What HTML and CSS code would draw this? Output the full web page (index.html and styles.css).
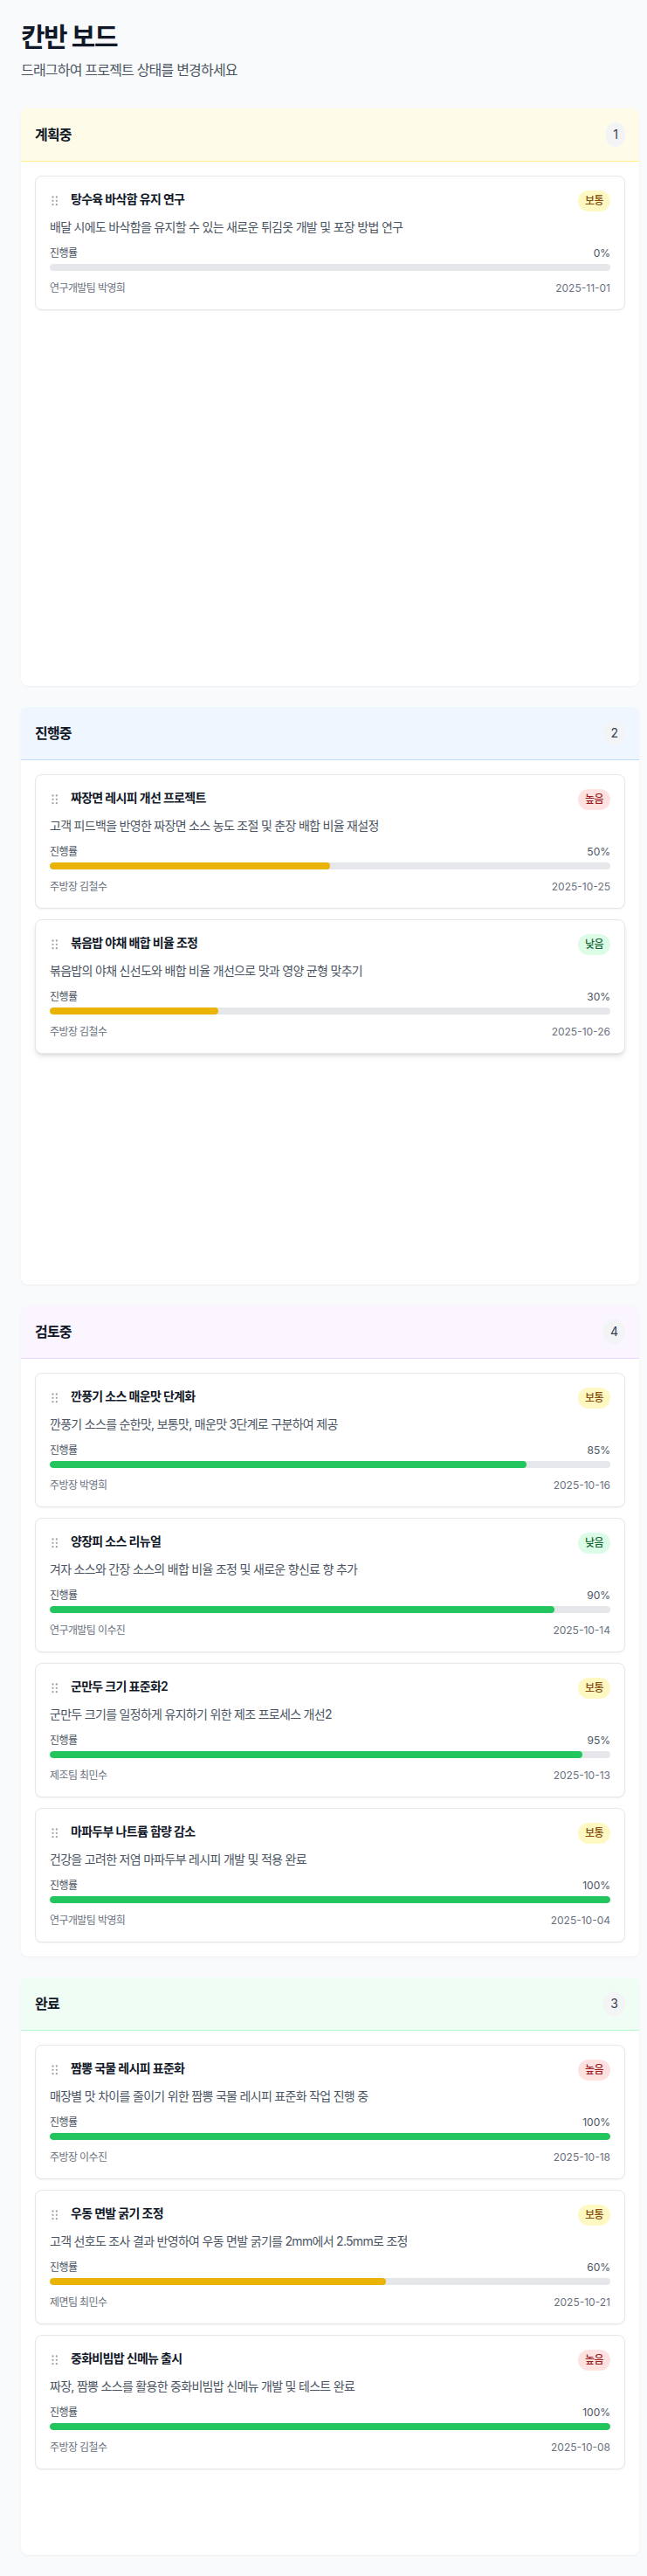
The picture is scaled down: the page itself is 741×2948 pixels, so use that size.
FILE: index.html
```html
<!DOCTYPE html>
<html lang="ko">
<head>
<meta charset="utf-8">
<title>칸반 보드</title>
<link rel="stylesheet" href="styles.css">
</head>
<body>
<div class="page">
  <header class="page-head">
    <h1 class="title">칸반 보드</h1>
    <p class="subtitle">드래그하여 프로젝트 상태를 변경하세요</p>
  </header>

  <main class="board">
    <section class="column">
      <div class="col-head head-yellow">
        <h2 class="col-title">계획중</h2>
        <span class="count">1</span>
      </div>
      <div class="col-body">
        <article class="card">
          <div class="card-top">
            <div class="card-name">
              <svg class="grip" viewBox="0 0 16 16" width="16" height="16"><circle cx="3.5" cy="5.5" r="1.15"/><circle cx="7.85" cy="5.5" r="1.15"/><circle cx="3.5" cy="9.85" r="1.15"/><circle cx="7.85" cy="9.85" r="1.15"/><circle cx="3.5" cy="14.2" r="1.15"/><circle cx="7.85" cy="14.2" r="1.15"/></svg>
              <h3 class="card-title">탕수육 바삭함 유지 연구</h3>
            </div>
            <span class="badge badge-mid">보통</span>
          </div>
          <p class="card-desc">배달 시에도 바삭함을 유지할 수 있는 새로운 튀김옷 개발 및 포장 방법 연구</p>
          <div class="progress-label"><span class="ko">진행률</span><span>0%</span></div>
          <div class="bar"><div class="bar-fill fill-yellow" style="width:0%"></div></div>
          <div class="card-foot"><span class="ko">연구개발팀 박영희</span><span>2025-11-01</span></div>
        </article>
      </div>
    </section>

    <section class="column">
      <div class="col-head head-blue">
        <h2 class="col-title">진행중</h2>
        <span class="count">2</span>
      </div>
      <div class="col-body">
        <article class="card">
          <div class="card-top">
            <div class="card-name">
              <svg class="grip" viewBox="0 0 16 16" width="16" height="16"><circle cx="3.5" cy="5.5" r="1.15"/><circle cx="7.85" cy="5.5" r="1.15"/><circle cx="3.5" cy="9.85" r="1.15"/><circle cx="7.85" cy="9.85" r="1.15"/><circle cx="3.5" cy="14.2" r="1.15"/><circle cx="7.85" cy="14.2" r="1.15"/></svg>
              <h3 class="card-title">짜장면 레시피 개선 프로젝트</h3>
            </div>
            <span class="badge badge-high">높음</span>
          </div>
          <p class="card-desc">고객 피드백을 반영한 짜장면 소스 농도 조절 및 춘장 배합 비율 재설정</p>
          <div class="progress-label"><span class="ko">진행률</span><span>50%</span></div>
          <div class="bar"><div class="bar-fill fill-yellow" style="width:50%"></div></div>
          <div class="card-foot"><span class="ko">주방장 김철수</span><span>2025-10-25</span></div>
        </article>
        <article class="card card-raised">
          <div class="card-top">
            <div class="card-name">
              <svg class="grip" viewBox="0 0 16 16" width="16" height="16"><circle cx="3.5" cy="5.5" r="1.15"/><circle cx="7.85" cy="5.5" r="1.15"/><circle cx="3.5" cy="9.85" r="1.15"/><circle cx="7.85" cy="9.85" r="1.15"/><circle cx="3.5" cy="14.2" r="1.15"/><circle cx="7.85" cy="14.2" r="1.15"/></svg>
              <h3 class="card-title">볶음밥 야채 배합 비율 조정</h3>
            </div>
            <span class="badge badge-low">낮음</span>
          </div>
          <p class="card-desc">볶음밥의 야채 신선도와 배합 비율 개선으로 맛과 영양 균형 맞추기</p>
          <div class="progress-label"><span class="ko">진행률</span><span>30%</span></div>
          <div class="bar"><div class="bar-fill fill-yellow" style="width:30%"></div></div>
          <div class="card-foot"><span class="ko">주방장 김철수</span><span>2025-10-26</span></div>
        </article>
      </div>
    </section>

    <section class="column">
      <div class="col-head head-purple">
        <h2 class="col-title">검토중</h2>
        <span class="count">4</span>
      </div>
      <div class="col-body">
        <article class="card">
          <div class="card-top">
            <div class="card-name">
              <svg class="grip" viewBox="0 0 16 16" width="16" height="16"><circle cx="3.5" cy="5.5" r="1.15"/><circle cx="7.85" cy="5.5" r="1.15"/><circle cx="3.5" cy="9.85" r="1.15"/><circle cx="7.85" cy="9.85" r="1.15"/><circle cx="3.5" cy="14.2" r="1.15"/><circle cx="7.85" cy="14.2" r="1.15"/></svg>
              <h3 class="card-title">깐풍기 소스 매운맛 단계화</h3>
            </div>
            <span class="badge badge-mid">보통</span>
          </div>
          <p class="card-desc">깐풍기 소스를 순한맛, 보통맛, 매운맛 3단계로 구분하여 제공</p>
          <div class="progress-label"><span class="ko">진행률</span><span>85%</span></div>
          <div class="bar"><div class="bar-fill fill-green" style="width:85%"></div></div>
          <div class="card-foot"><span class="ko">주방장 박영희</span><span>2025-10-16</span></div>
        </article>
        <article class="card">
          <div class="card-top">
            <div class="card-name">
              <svg class="grip" viewBox="0 0 16 16" width="16" height="16"><circle cx="3.5" cy="5.5" r="1.15"/><circle cx="7.85" cy="5.5" r="1.15"/><circle cx="3.5" cy="9.85" r="1.15"/><circle cx="7.85" cy="9.85" r="1.15"/><circle cx="3.5" cy="14.2" r="1.15"/><circle cx="7.85" cy="14.2" r="1.15"/></svg>
              <h3 class="card-title">양장피 소스 리뉴얼</h3>
            </div>
            <span class="badge badge-low">낮음</span>
          </div>
          <p class="card-desc">겨자 소스와 간장 소스의 배합 비율 조정 및 새로운 향신료 향 추가</p>
          <div class="progress-label"><span class="ko">진행률</span><span>90%</span></div>
          <div class="bar"><div class="bar-fill fill-green" style="width:90%"></div></div>
          <div class="card-foot"><span class="ko">연구개발팀 이수진</span><span>2025-10-14</span></div>
        </article>
        <article class="card">
          <div class="card-top">
            <div class="card-name">
              <svg class="grip" viewBox="0 0 16 16" width="16" height="16"><circle cx="3.5" cy="5.5" r="1.15"/><circle cx="7.85" cy="5.5" r="1.15"/><circle cx="3.5" cy="9.85" r="1.15"/><circle cx="7.85" cy="9.85" r="1.15"/><circle cx="3.5" cy="14.2" r="1.15"/><circle cx="7.85" cy="14.2" r="1.15"/></svg>
              <h3 class="card-title">군만두 크기 표준화2</h3>
            </div>
            <span class="badge badge-mid">보통</span>
          </div>
          <p class="card-desc">군만두 크기를 일정하게 유지하기 위한 제조 프로세스 개선2</p>
          <div class="progress-label"><span class="ko">진행률</span><span>95%</span></div>
          <div class="bar"><div class="bar-fill fill-green" style="width:95%"></div></div>
          <div class="card-foot"><span class="ko">제조팀 최민수</span><span>2025-10-13</span></div>
        </article>
        <article class="card">
          <div class="card-top">
            <div class="card-name">
              <svg class="grip" viewBox="0 0 16 16" width="16" height="16"><circle cx="3.5" cy="5.5" r="1.15"/><circle cx="7.85" cy="5.5" r="1.15"/><circle cx="3.5" cy="9.85" r="1.15"/><circle cx="7.85" cy="9.85" r="1.15"/><circle cx="3.5" cy="14.2" r="1.15"/><circle cx="7.85" cy="14.2" r="1.15"/></svg>
              <h3 class="card-title">마파두부 나트륨 함량 감소</h3>
            </div>
            <span class="badge badge-mid">보통</span>
          </div>
          <p class="card-desc">건강을 고려한 저염 마파두부 레시피 개발 및 적용 완료</p>
          <div class="progress-label"><span class="ko">진행률</span><span>100%</span></div>
          <div class="bar"><div class="bar-fill fill-green" style="width:100%"></div></div>
          <div class="card-foot"><span class="ko">연구개발팀 박영희</span><span>2025-10-04</span></div>
        </article>
      </div>
    </section>

    <section class="column">
      <div class="col-head head-green">
        <h2 class="col-title">완료</h2>
        <span class="count">3</span>
      </div>
      <div class="col-body">
        <article class="card">
          <div class="card-top">
            <div class="card-name">
              <svg class="grip" viewBox="0 0 16 16" width="16" height="16"><circle cx="3.5" cy="5.5" r="1.15"/><circle cx="7.85" cy="5.5" r="1.15"/><circle cx="3.5" cy="9.85" r="1.15"/><circle cx="7.85" cy="9.85" r="1.15"/><circle cx="3.5" cy="14.2" r="1.15"/><circle cx="7.85" cy="14.2" r="1.15"/></svg>
              <h3 class="card-title">짬뽕 국물 레시피 표준화</h3>
            </div>
            <span class="badge badge-high">높음</span>
          </div>
          <p class="card-desc">매장별 맛 차이를 줄이기 위한 짬뽕 국물 레시피 표준화 작업 진행 중</p>
          <div class="progress-label"><span class="ko">진행률</span><span>100%</span></div>
          <div class="bar"><div class="bar-fill fill-green" style="width:100%"></div></div>
          <div class="card-foot"><span class="ko">주방장 이수진</span><span>2025-10-18</span></div>
        </article>
        <article class="card">
          <div class="card-top">
            <div class="card-name">
              <svg class="grip" viewBox="0 0 16 16" width="16" height="16"><circle cx="3.5" cy="5.5" r="1.15"/><circle cx="7.85" cy="5.5" r="1.15"/><circle cx="3.5" cy="9.85" r="1.15"/><circle cx="7.85" cy="9.85" r="1.15"/><circle cx="3.5" cy="14.2" r="1.15"/><circle cx="7.85" cy="14.2" r="1.15"/></svg>
              <h3 class="card-title">우동 면발 굵기 조정</h3>
            </div>
            <span class="badge badge-mid">보통</span>
          </div>
          <p class="card-desc">고객 선호도 조사 결과 반영하여 우동 면발 굵기를 2mm에서 2.5mm로 조정</p>
          <div class="progress-label"><span class="ko">진행률</span><span>60%</span></div>
          <div class="bar"><div class="bar-fill fill-yellow" style="width:60%"></div></div>
          <div class="card-foot"><span class="ko">제면팀 최민수</span><span>2025-10-21</span></div>
        </article>
        <article class="card">
          <div class="card-top">
            <div class="card-name">
              <svg class="grip" viewBox="0 0 16 16" width="16" height="16"><circle cx="3.5" cy="5.5" r="1.15"/><circle cx="7.85" cy="5.5" r="1.15"/><circle cx="3.5" cy="9.85" r="1.15"/><circle cx="7.85" cy="9.85" r="1.15"/><circle cx="3.5" cy="14.2" r="1.15"/><circle cx="7.85" cy="14.2" r="1.15"/></svg>
              <h3 class="card-title">중화비빔밥 신메뉴 출시</h3>
            </div>
            <span class="badge badge-high">높음</span>
          </div>
          <p class="card-desc">짜장, 짬뽕 소스를 활용한 중화비빔밥 신메뉴 개발 및 테스트 완료</p>
          <div class="progress-label"><span class="ko">진행률</span><span>100%</span></div>
          <div class="bar"><div class="bar-fill fill-green" style="width:100%"></div></div>
          <div class="card-foot"><span class="ko">주방장 김철수</span><span>2025-10-08</span></div>
        </article>
      </div>
    </section>
  </main>
</div>
</body>
</html>
```

FILE: styles.css
```css
* {
  box-sizing: border-box;
}

html,
body {
  margin: 0;
  padding: 0;
}

body {
  background: #f9fafb;
  color: #111827;
  font-family: Inter, "Noto Sans CJK KR", "Noto Sans", sans-serif;
  font-feature-settings: "palt";
}

.page {
  padding: 24px 0 24px 24px;
}

.page-head {
  margin-bottom: 32px;
}

.title,
.subtitle,
.col-title,
.card-title,
.card-desc,
.badge,
.ko {
  letter-spacing: -0.05em;
}

.title {
  margin: 0 0 8px;
  font-size: 30px;
  line-height: 36px;
  font-weight: 700;
  color: #111827;
}

.subtitle {
  margin: 0;
  font-size: 16px;
  line-height: 24px;
  color: #4b5563;
}

.board {
  width: 708px;
  display: flex;
  flex-direction: column;
  gap: 24px;
}

.column {
  background: #ffffff;
  border-radius: 8px;
  box-shadow: 0 1px 2px rgba(0, 0, 0, 0.05);
}

.col-head {
  display: flex;
  align-items: center;
  justify-content: space-between;
  height: 61px;
  padding: 16px;
  border-bottom: 1px solid;
  border-radius: 8px 8px 0 0;
}

.head-yellow {
  background: #fefce8;
  border-bottom-color: #fef08a;
}

.head-blue {
  background: #eff6ff;
  border-bottom-color: #bfdbfe;
}

.head-purple {
  background: #faf5ff;
  border-bottom-color: #e9d5ff;
}

.head-green {
  background: #f0fdf4;
  border-bottom-color: #bbf7d0;
}

.col-title {
  margin: 0;
  font-size: 16px;
  line-height: 24px;
  font-weight: 600;
  color: #111827;
}

.count {
  background: #f3f4f6;
  color: #374151;
  font-size: 14px;
  line-height: 20px;
  padding: 4px 8px;
  border-radius: 9999px;
}

.col-body {
  min-height: 600px;
  padding: 16px;
  display: flex;
  flex-direction: column;
  gap: 12px;
}

.card {
  background: #ffffff;
  border: 1px solid #e5e7eb;
  border-radius: 8px;
  padding: 16px;
  box-shadow: 0 1px 2px rgba(0, 0, 0, 0.05);
}

.card-raised {
  box-shadow: 0 4px 6px -1px rgba(0, 0, 0, 0.1), 0 2px 4px -2px rgba(0, 0, 0, 0.1);
}

.card-top {
  display: flex;
  align-items: flex-start;
  justify-content: space-between;
  margin-bottom: 8px;
}

.card-name {
  display: flex;
  align-items: center;
  gap: 8px;
}

.grip {
  flex: none;
  fill: #9ca3af;
}

.card-title {
  margin: 0;
  font-size: 14px;
  line-height: 20px;
  font-weight: 600;
  color: #111827;
}

.badge {
  flex: none;
  font-size: 12px;
  line-height: 16px;
  font-weight: 500;
  padding: 4px 8px;
  border-radius: 9999px;
}

.badge-mid {
  background: #fef9c3;
  color: #854d0e;
}

.badge-high {
  background: #fee2e2;
  color: #991b1b;
}

.badge-low {
  background: #dcfce7;
  color: #166534;
}

.card-desc {
  margin: 0 0 12px;
  font-size: 14px;
  line-height: 20px;
  color: #4b5563;
}

.progress-label {
  display: flex;
  justify-content: space-between;
  font-size: 12px;
  line-height: 16px;
  color: #4b5563;
  margin-bottom: 4px;
}

.bar {
  height: 8px;
  background: #e5e7eb;
  border-radius: 9999px;
  overflow: hidden;
}

.bar-fill {
  height: 100%;
  border-radius: 9999px;
}

.fill-yellow {
  background: #eab308;
}

.fill-green {
  background: #22c55e;
}

.card-foot {
  display: flex;
  justify-content: space-between;
  margin-top: 12px;
  font-size: 12px;
  line-height: 16px;
  color: #6b7280;
}
```
